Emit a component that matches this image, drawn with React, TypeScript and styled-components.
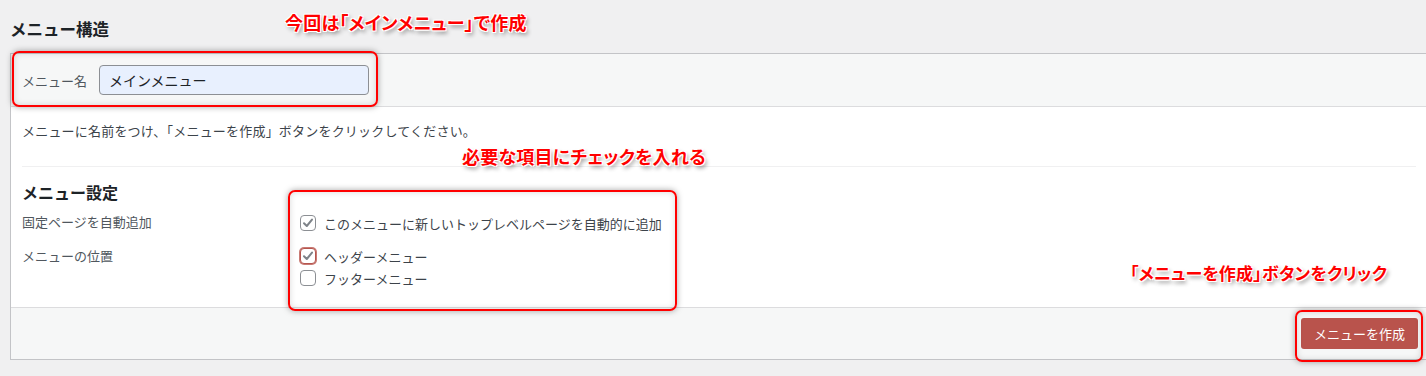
import React from "react";
import styled, { createGlobalStyle } from "styled-components";

const GlobalStyle = createGlobalStyle`
  html, body {
    margin: 0;
    padding: 0;
    background: #f0f0f1;
  }
  body {
    font-family: "Noto Sans CJK JP", "Noto Sans", sans-serif;
    color: #1d2327;
    overflow: hidden;
  }
`;

const Page = styled.div`
  position: relative;
  width: 1426px;
  height: 376px;
  padding-left: 10px;
  box-sizing: border-box;
`;

const Title = styled.h2`
  margin: 0;
  height: 53px;
  display: flex;
  align-items: center;
  padding-top: 4px;
  box-sizing: border-box;
  font-size: 16.5px;
  font-weight: 700;
  color: #1d2327;
`;

const Panel = styled.div`
  border: 1px solid #c3c4c7;
  border-right: none;
  background: #fff;
`;

const PanelHeader = styled.div`
  display: flex;
  align-items: center;
  gap: 12px;
  height: 52px;
  padding-left: 11px;
  background: #f6f7f7;
  border-bottom: 1px solid #dcdcde;
`;

const Label = styled.label`
  font-size: 13px;
  color: #50575e;
`;

const NameInput = styled.input`
  width: 270px;
  height: 30px;
  box-sizing: border-box;
  padding: 0 9px;
  border: 1px solid #8c8f94;
  border-radius: 4px;
  background: #e8f0fe;
  font-family: inherit;
  font-size: 14px;
  color: #1d2327;
  outline: none;
`;

const PanelBody = styled.div`
  padding: 15px 10px 18px 11px;
`;

const Intro = styled.p`
  margin: 0 0 26px;
  font-size: 13px;
  line-height: 18px;
  letter-spacing: 0.2px;
  color: #3c434a;
`;

const Divider = styled.hr`
  margin: 0;
  border: none;
  border-top: 1px solid #f0f0f1;
`;

const SectionTitle = styled.h3`
  margin: 14px 0 8px;
  font-size: 16px;
  line-height: 22px;
  font-weight: 700;
  color: #1d2327;
`;

const SettingRow = styled.div<{ $gap?: number }>`
  display: grid;
  grid-template-columns: 278px 1fr;
  align-items: start;
  margin-bottom: ${(p) => p.$gap ?? 0}px;
`;

const RowLabel = styled.div`
  font-size: 13px;
  line-height: 22px;
  color: #50575e;
`;

const OptionList = styled.div`
  display: flex;
  flex-direction: column;
`;

const Option = styled.label<{ $tall?: boolean }>`
  display: flex;
  align-items: center;
  gap: 8px;
  height: ${(p) => (p.$tall ? 24 : 22)}px;
  font-size: 13px;
  color: #3c434a;
`;

const Box = styled.span<{ $focus?: boolean }>`
  width: 16px;
  height: 16px;
  box-sizing: border-box;
  border: 1px solid ${(p) => (p.$focus ? "#b5554e" : "#8c8f94")};
  box-shadow: ${(p) => (p.$focus ? "0 0 0 1px #c97a74" : "none")};
  border-radius: 4px;
  background: #fff;
  display: flex;
  align-items: center;
  justify-content: center;
`;

const PanelFooter = styled.div`
  display: flex;
  justify-content: flex-end;
  padding: 10px 8px 10px 0;
  background: #f6f7f7;
  border-top: 1px solid #dcdcde;
`;

const CreateButton = styled.button`
  height: 31px;
  padding: 0 13px;
  border: none;
  border-radius: 3px;
  background: #b9534c;
  color: #fff;
  font-family: inherit;
  font-size: 13px;
`;

const Callout = styled.div`
  position: absolute;
  border: 2px solid #ff0000;
  border-radius: 7px;
  box-shadow: 0 0 6px rgba(0, 0, 0, 0.35), inset 0 0 6px rgba(0, 0, 0, 0.15);
  box-sizing: border-box;
  pointer-events: none;
`;

const Note = styled.div<{ $size?: number }>`
  position: absolute;
  transform: translateY(-50%);
  font-size: ${(p) => p.$size ?? 18}px;
  font-weight: 700;
  line-height: 1;
  white-space: nowrap;
  color: #ff0000;
  letter-spacing: 0.2px;
  font-feature-settings: "palt";
  text-shadow: -1px -1px 0 #fff, 1px -1px 0 #fff, -1px 1px 0 #fff,
    1px 1px 0 #fff, 2px 3px 4px rgba(0, 0, 0, 0.45);
`;

function Check({ checked, focus }: { checked?: boolean; focus?: boolean }) {
  return (
    <Box $focus={focus}>
      {checked && (
        <svg width="14" height="14" viewBox="0 0 14 14">
          <path
            d="M3 7.2 L5.8 10 L11 3.6"
            fill="none"
            stroke="#7e8389"
            strokeWidth="2"
            strokeLinecap="round"
            strokeLinejoin="round"
          />
        </svg>
      )}
    </Box>
  );
}

export default function App() {
  return (
    <Page>
      <GlobalStyle />
      <Title>メニュー構造</Title>
      <Panel>
        <PanelHeader>
          <Label>メニュー名</Label>
          <NameInput defaultValue="メインメニュー" />
        </PanelHeader>
        <PanelBody>
          <Intro>
            メニューに名前をつけ、「メニューを作成」ボタンをクリックしてください。
          </Intro>
          <Divider />
          <SectionTitle>メニュー設定</SectionTitle>
          <SettingRow $gap={10}>
            <RowLabel>固定ページを自動追加</RowLabel>
            <OptionList>
              <Option $tall>
                <Check checked />
                このメニューに新しいトップレベルページを自動的に追加
              </Option>
            </OptionList>
          </SettingRow>
          <SettingRow>
            <RowLabel>メニューの位置</RowLabel>
            <OptionList>
              <Option>
                <Check checked focus />
                ヘッダーメニュー
              </Option>
              <Option>
                <Check />
                フッターメニュー
              </Option>
            </OptionList>
          </SettingRow>
        </PanelBody>
        <PanelFooter>
          <CreateButton>メニューを作成</CreateButton>
        </PanelFooter>
      </Panel>

      <Callout style={{ left: 12, top: 51, width: 366, height: 56 }} />
      <Callout style={{ left: 288, top: 190, width: 389, height: 121 }} />
      <Callout style={{ left: 1295, top: 310, width: 128, height: 52 }} />

      <Note style={{ left: 285, top: 22 }}>今回は「メインメニュー」で作成</Note>
      <Note style={{ left: 462, top: 156 }}>必要な項目にチェックを入れる</Note>
      <Note $size={17} style={{ left: 1130, top: 272 }}>
        「メニューを作成」ボタンをクリック
      </Note>
    </Page>
  );
}
